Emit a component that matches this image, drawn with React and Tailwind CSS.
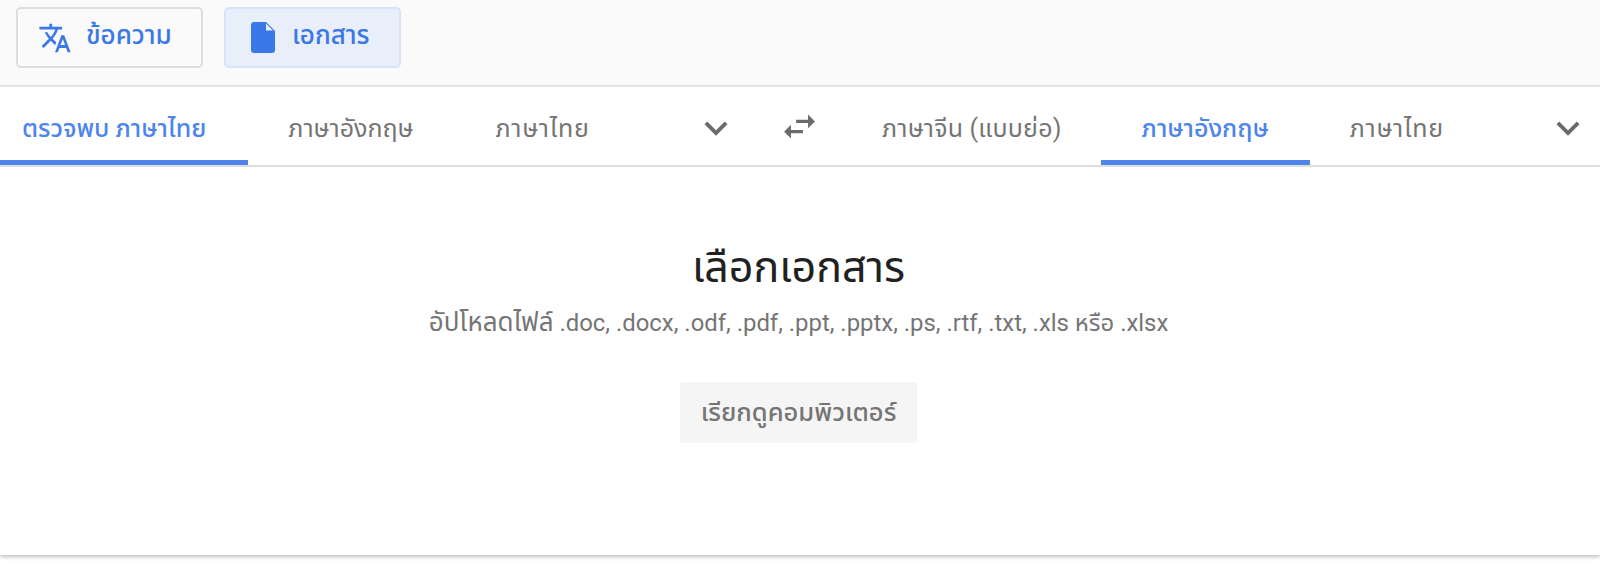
const font = { fontFamily: '"Roboto", "Noto Sans", "Noto Sans Thai", "DejaVu Sans", sans-serif' };

const TranslateIcon = () => (
  <svg viewBox="0 0 24 24" className="w-[34px] h-[34px] fill-[#3b78e7]">
    <path d="M12.87 15.07l-2.54-2.51.03-.03c1.74-1.94 2.98-4.17 3.71-6.53H17V4h-7V2H8v2H1v1.99h11.17C11.5 7.92 10.44 9.75 9 11.35 8.07 10.32 7.3 9.19 6.69 8h-2c.73 1.63 1.73 3.17 2.98 4.56l-5.09 5.02L4 19l5-5 3.11 3.11.76-2.04zM18.5 10h-2L12 22h2l1.12-3h4.75L21 22h2l-4.5-12zm-2.62 7l1.62-4.33L19.12 17h-3.24z" />
  </svg>
);

const FileIcon = () => (
  <svg viewBox="0 0 24 31" className="w-[24px] h-[31px]">
    <path fill="#3b78e7" d="M3 0h12l9 9v19c0 1.7-1.3 3-3 3H3c-1.7 0-3-1.3-3-3V3c0-1.700 1.300-3 3-3z" />
    <path fill="#e8effb" d="M15 1.500V8.500h7z" />
  </svg>
);

const Chevron = () => (
  <svg viewBox="0 0 24 24" className="w-[46px] h-[46px] fill-[#6b6b6b]">
    <path d="M16.59 8.59L12 13.17 7.41 8.59 6 10l6 6 6-6z" />
  </svg>
);

const Tab = ({ label, active, className }) => (
  <div
    className={`h-full flex items-center pt-[10px] border-b-[5px] text-[25px] whitespace-nowrap ${
      active ? 'border-[#4d85ec] text-[#4d85ec] font-medium' : 'border-transparent text-[#757575]'
    } ${className}`}
  >
    {label}
  </div>
);

export default function App() {
  return (
    <div className="w-full h-[582px] bg-white overflow-hidden" style={font}>
      {/* top bar */}
      <div className="h-[87px] bg-[#fafafa] border-b-2 border-[#e3e3e3] flex items-start pt-[7px] pl-[16px] gap-[21px]">
        <button className="w-[187px] h-[61px] rounded-[5px] border-2 border-[#dddddd] bg-[#fafafa] flex items-center pl-[20px] gap-[14px] text-[#3b78e7] text-[26px] font-medium">
          <TranslateIcon />
          <span className="mb-[4px]">ข้อความ</span>
        </button>
        <button className="w-[177px] h-[61px] rounded-[5px] border-2 border-[#d6e4f9] bg-[#e8effb] flex items-center pl-[25px] gap-[17px] text-[#3b78e7] text-[26px] font-medium">
          <FileIcon />
          <span className="mb-[4px]">เอกสาร</span>
        </button>
      </div>

      {/* language tabs */}
      <div className="h-[80px] border-b-2 border-[#e3e3e3] flex items-center">
        <div className="h-full w-[770px] flex items-center">
          <Tab label="ตรวจพบ ภาษาไทย" active className="pl-[22px] pr-[42px]" />
          <Tab label="ภาษาอังกฤษ" className="px-[40px]" />
          <Tab label="ภาษาไทย" className="pl-[42px] tracking-[0.7px]" />
          <div className="ml-auto mr-[31px] mt-[3px]">
            <Chevron />
          </div>
        </div>
        <div className="w-[60px] flex justify-center">
          <svg viewBox="0 0 24 24" className="w-[41px] h-[41px] fill-[#6b6b6b] -translate-x-px">
            <path d="M6.99 11L3 15l3.990 4v-3H14v-2H6.990v-3zM21 9l-3.990-4v3H10v2h7.010v3L21 9z" />
          </svg>
        </div>
        <div className="h-full flex-1 flex items-center pl-[11px]">
          <Tab label="ภาษาจีน (แบบย่อ)" className="pl-[41px] pr-[39px] tracking-[0.2px]" />
          <Tab label="ภาษาอังกฤษ" active className="px-[41px]" />
          <Tab label="ภาษาไทย" className="pl-[40px] tracking-[0.7px]" />
          <div className="ml-auto mr-[9px] mt-[3px]">
            <Chevron />
          </div>
        </div>
      </div>

      {/* document picker */}
      <div className="h-[388px] bg-white shadow-[0_2px_4px_rgba(0,0,0,0.25)] flex flex-col items-center pt-[72px] pr-[3px]">
        <h1 className="text-[43px] leading-[56px] font-normal text-[#212121]">เลือกเอกสาร</h1>
        <p className="mt-[11px] text-[23.9px] leading-[32px] text-[#757575] whitespace-nowrap">
          <span className="text-[26px]">อัปโหลดไฟล์</span> .doc, .docx, .odf, .pdf, .ppt, .pptx, .ps, .rtf, .txt, .xls หรือ .xlsx
        </p>
        <button className="mt-[43px] w-[237px] h-[61px] bg-[#f5f5f5] rounded-[2px] text-[25.5px] font-medium text-[#757575] whitespace-nowrap">
          เรียกดูคอมพิวเตอร์
        </button>
      </div>
    </div>
  );
}
